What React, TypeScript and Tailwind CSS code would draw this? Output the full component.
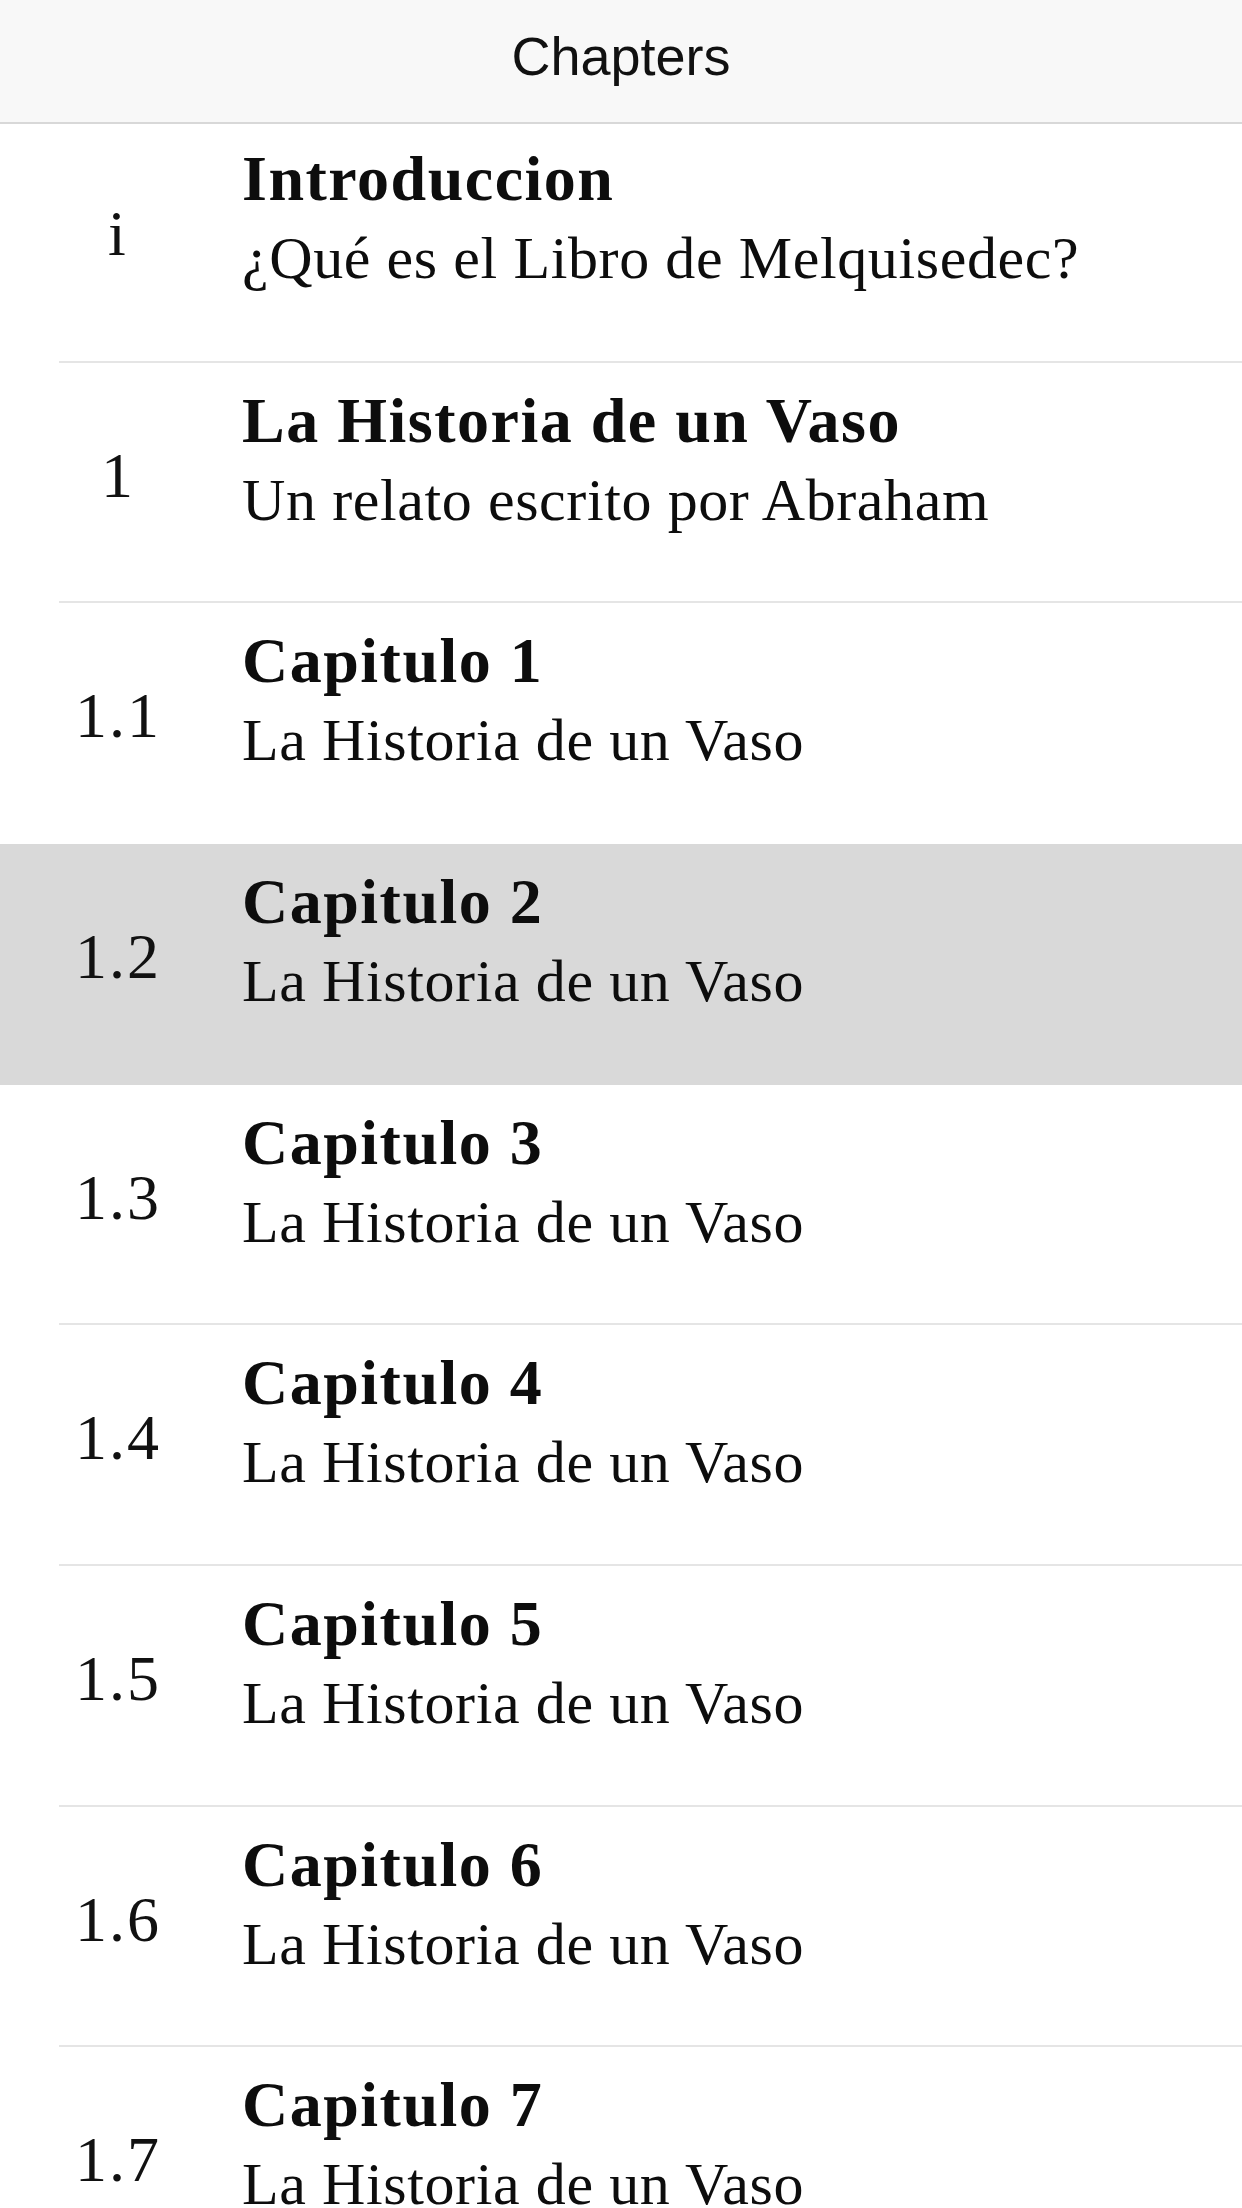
import React from 'react';

type Chapter = {
  num: string;
  title: string;
  subtitle: string;
};

const chapters: Chapter[] = [
  { num: 'i', title: 'Introduccion', subtitle: '¿Qué es el Libro de Melquisedec?' },
  { num: '1', title: 'La Historia de un Vaso', subtitle: 'Un relato escrito por Abraham' },
  { num: '1.1', title: 'Capitulo 1', subtitle: 'La Historia de un Vaso' },
  { num: '1.2', title: 'Capitulo 2', subtitle: 'La Historia de un Vaso' },
  { num: '1.3', title: 'Capitulo 3', subtitle: 'La Historia de un Vaso' },
  { num: '1.4', title: 'Capitulo 4', subtitle: 'La Historia de un Vaso' },
  { num: '1.5', title: 'Capitulo 5', subtitle: 'La Historia de un Vaso' },
  { num: '1.6', title: 'Capitulo 6', subtitle: 'La Historia de un Vaso' },
  { num: '1.7', title: 'Capitulo 7', subtitle: 'La Historia de un Vaso' },
];

const SELECTED = 3;

interface ChapterRowProps {
  chapter: Chapter;
  first: boolean;
  selected: boolean;
  hideSeparator: boolean;
}

const ChapterRow: React.FC<ChapterRowProps> = ({ chapter, first, selected, hideSeparator }) => {
  return (
    <div
      className={`flex flex-col shrink-0 ${first ? 'h-[238.5px]' : 'h-[240.7px]'} ${
        selected ? 'bg-[#d9d9d9]' : 'bg-white'
      }`}
    >
      <div className="flex flex-1 items-start">
        <div
          className={`w-[234px] shrink-0 text-center text-[64px] leading-[81px] tracking-[2px] pl-[2px] text-[#111] ${
            first ? 'pt-[69px]' : 'pt-[72px]'
          }`}
        >
          {chapter.num}
        </div>
        <div className={`ml-[8px] flex flex-col text-[#0d0d0d] ${first ? 'pt-[15px]' : 'pt-[18px]'}`}>
          <div className="text-[64px] leading-[79px] font-bold tracking-[1.5px] whitespace-nowrap">
            {chapter.title}
          </div>
          <div className="text-[60px] leading-[81px] tracking-[0.6px] whitespace-nowrap">
            {chapter.subtitle}
          </div>
        </div>
      </div>
      <div className={`ml-[59px] h-[2px] ${hideSeparator ? 'bg-transparent' : 'bg-[#e5e5e5]'}`} />
    </div>
  );
};

const App: React.FC = () => {
  return (
    <div className="h-[2208px] w-full overflow-hidden bg-white flex flex-col font-['Liberation_Serif','DejaVu_Serif',serif]">
      <header className="h-[124px] shrink-0 bg-[#f8f8f8] border-b-2 border-[#d8d8d8] flex justify-center items-start">
        <h1 className="pt-[26px] text-[54px] leading-[60px] font-normal text-[#111] font-['Liberation_Sans','Arial',sans-serif]">
          Chapters
        </h1>
      </header>
      <div className="flex flex-col">
        {chapters.map((c, i) => (
          <ChapterRow
            key={c.num}
            chapter={c}
            first={i === 0}
            selected={i === SELECTED}
            hideSeparator={i === SELECTED || i === SELECTED - 1}
          />
        ))}
      </div>
    </div>
  );
};

export default App;
